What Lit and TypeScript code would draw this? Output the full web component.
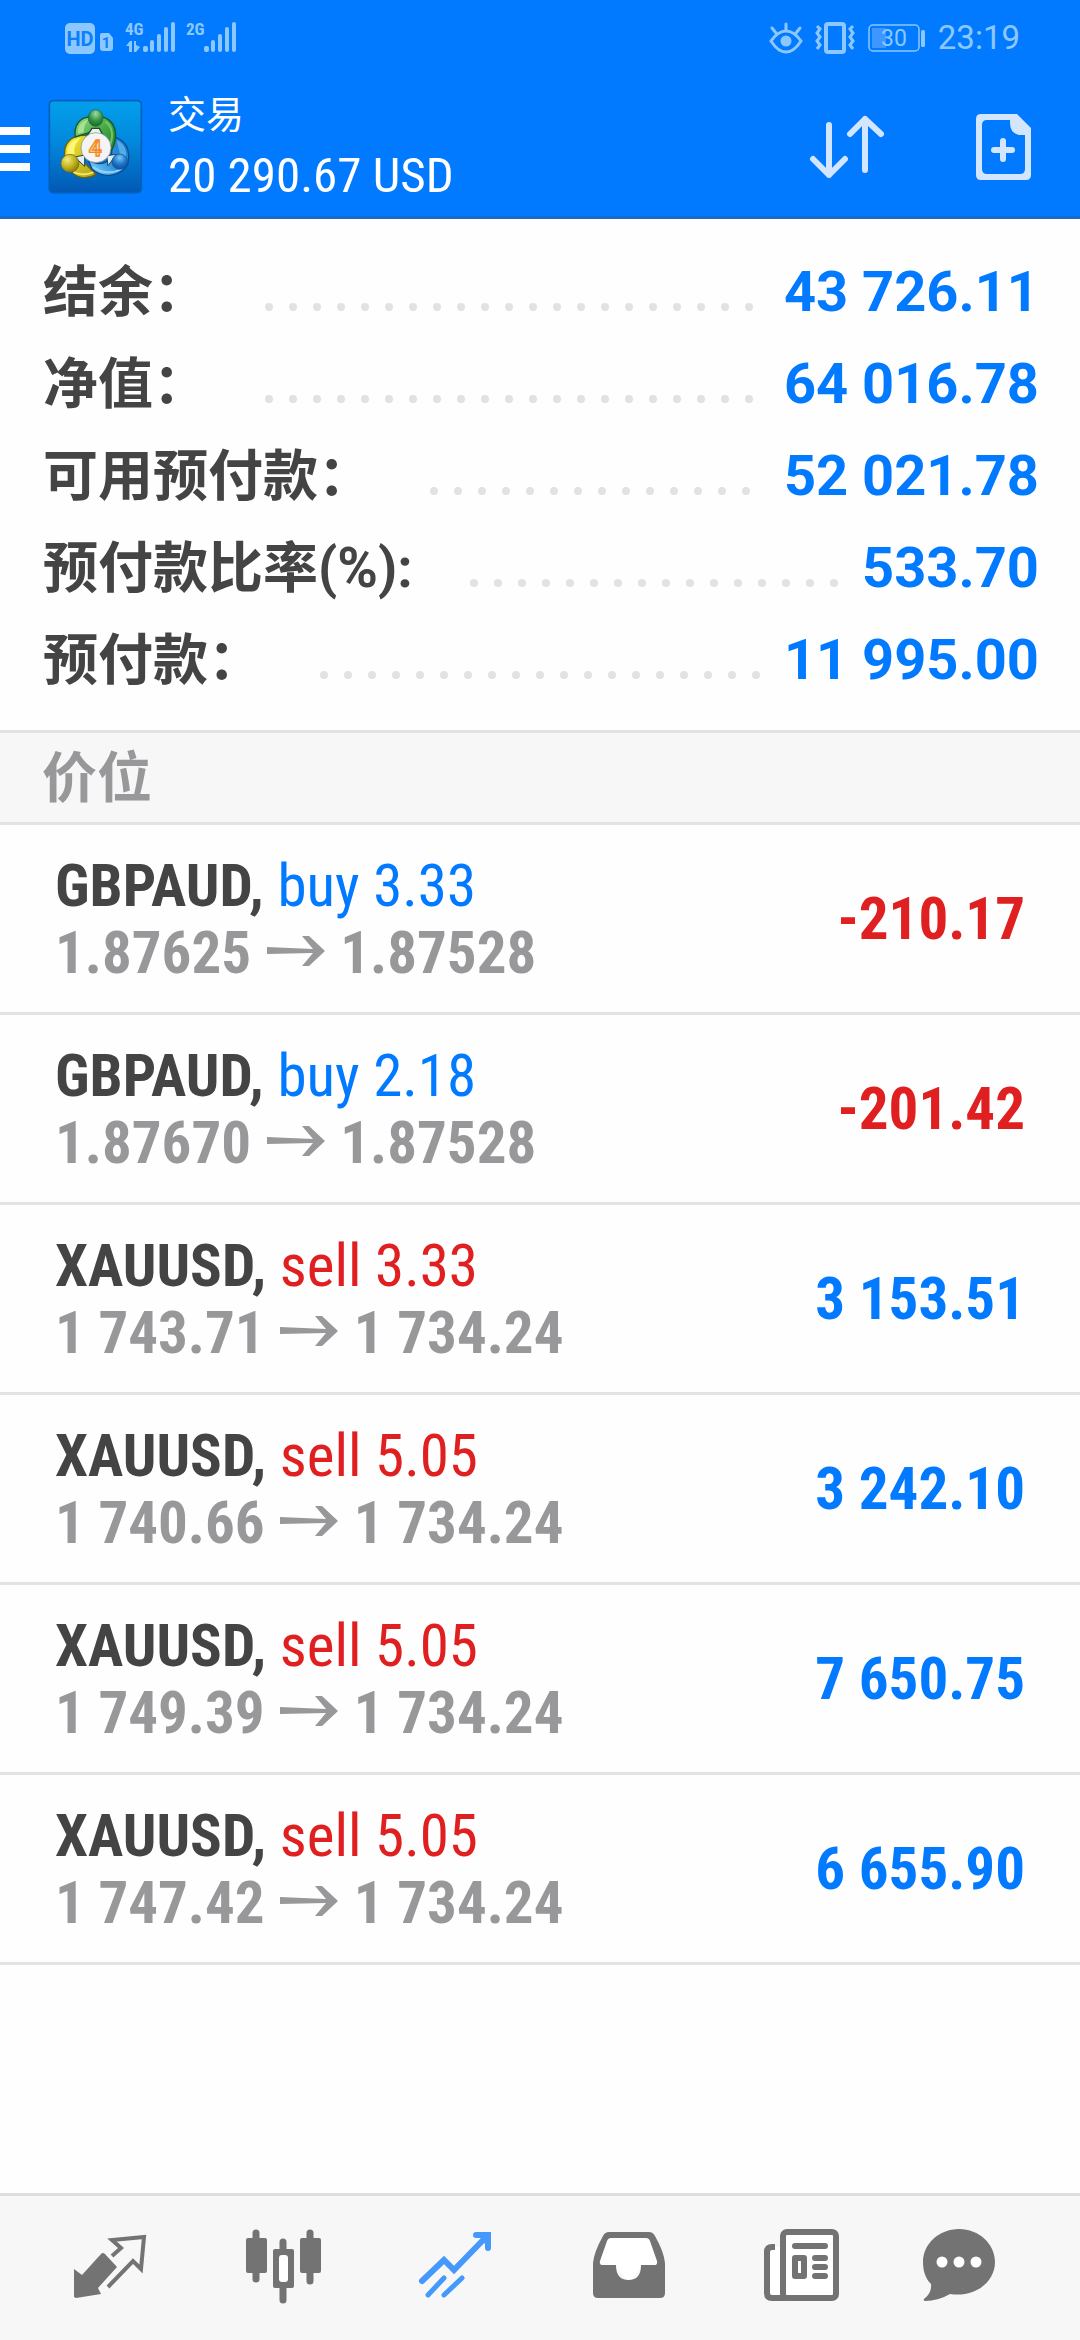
import { LitElement, html, css, svg } from "lit";
import { customElement } from "lit/decorators.js";

interface Total { label: string; value: string; }
interface Position {
  symbol: string; side: "buy" | "sell"; volume: string;
  open: string; current: string; profit: string;
}

const totals: Total[] = [
  { label: "结余：", value: "43 726.11" },
  { label: "净值：", value: "64 016.78" },
  { label: "可用预付款：", value: "52 021.78" },
  { label: "预付款比率(%):", value: "533.70" },
  { label: "预付款：", value: "11 995.00" },
];

const positions: Position[] = [
  { symbol: "GBPAUD", side: "buy", volume: "3.33", open: "1.87625", current: "1.87528", profit: "-210.17" },
  { symbol: "GBPAUD", side: "buy", volume: "2.18", open: "1.87670", current: "1.87528", profit: "-201.42" },
  { symbol: "XAUUSD", side: "sell", volume: "3.33", open: "1 743.71", current: "1 734.24", profit: "3 153.51" },
  { symbol: "XAUUSD", side: "sell", volume: "5.05", open: "1 740.66", current: "1 734.24", profit: "3 242.10" },
  { symbol: "XAUUSD", side: "sell", volume: "5.05", open: "1 749.39", current: "1 734.24", profit: "7 650.75" },
  { symbol: "XAUUSD", side: "sell", volume: "5.05", open: "1 747.42", current: "1 734.24", profit: "6 655.90" },
];

const dots = Array.from({ length: 40 });

@customElement("status-bar")
export class StatusBar extends LitElement {
  static styles = css`
    :host { display: flex; justify-content: space-between; align-items: center; height: 76px;
      padding: 0 60px 0 64px; color: #8cc8ff; }
    .group { display: flex; align-items: center; }
    .left { width: 176px; height: 36px; }
    .right { gap: 11px; }
    .eye { width: 34px; height: 34px; }
    .vibrate { width: 42px; height: 34px; }
    .battery { width: 60px; height: 34px; }
    .time { font: 400 33px/38px Roboto, "Noto Sans", sans-serif; }
    .net { font: 700 17px "Roboto Condensed", Roboto, sans-serif; }
    .hd { font: 700 20px Roboto, sans-serif; }
    .sim { font: 700 15px Roboto, sans-serif; }
    .level { font: 400 23px Roboto, sans-serif; }
  `;
  private bars(x: number) {
    return svg`<g transform="translate(${x} 0)">
      <rect x="0" y="26" width="5" height="6" rx="2"/><rect x="7" y="20" width="4" height="12" rx="2"/>
      <rect x="14" y="14" width="4" height="18" rx="2"/><rect x="21" y="7" width="4" height="25" rx="2"/>
      <rect x="28" y="2" width="4" height="30" rx="2"/></g>`;
  }
  render() {
    return html`
      <svg class="left" viewBox="0 0 176 36" fill="currentColor" role="img" aria-label="HD 4G 2G">
        <rect x="1" y="3" width="30" height="31" rx="5"/>
        <text class="hd" x="16" y="26" text-anchor="middle" fill="#0b7ffc">HD</text>
        <path d="M38 13H45L49 18V28Q49 31 46 31H39Q36 31 36 28V15Q36 13 38 13Z"/>
        <text class="sim" x="42" y="28" text-anchor="middle" fill="#0b7ffc">1</text>
        <text class="net" x="61" y="15">4G</text>
        <path d="M62 26L66 21H68V32H65V26ZM70 21H72V25L76 27L72 32H70Z"/>
        ${this.bars(79)}
        <text class="net" x="122" y="15">2G</text>
        ${this.bars(140)}
      </svg>
      <div class="group right">
        <svg class="eye" viewBox="0 0 34 34" fill="none" stroke="currentColor" stroke-width="3" stroke-linecap="round" aria-hidden="true">
          <path d="M2 20Q9 10 17 10T32 20Q25 31 17 31T2 20Z"/><path d="M17 9V3M7 12L3 7M27 12L31 7"/>
          <circle cx="17" cy="20" r="5.5" fill="currentColor" stroke="none"/>
        </svg>
        <svg class="vibrate" viewBox="0 0 42 34" fill="none" stroke="currentColor" stroke-width="4" aria-hidden="true">
          <rect x="12" y="3" width="18" height="28" rx="2"/>
          <path stroke-width="3" d="M3 5L6 8L3 12L6 16L3 20L6 24L3 28M39 5L36 8L39 12L36 16L39 20L36 24L39 28"/>
        </svg>
        <svg class="battery" viewBox="0 0 60 34" role="img" aria-label="30%">
          <rect x="2" y="4" width="50" height="26" rx="4" fill="none" stroke="currentColor" stroke-width="1.5"/>
          <rect x="5" y="7" width="14" height="20" rx="1" fill="#3d97ff"/>
          <rect x="54" y="9" width="4" height="17" rx="1.5" fill="currentColor"/>
          <text class="level" x="27" y="25" text-anchor="middle" fill="currentColor">30</text>
        </svg>
        <span class="time">23:19</span>
      </div>`;
  }
}

@customElement("app-header")
export class AppHeader extends LitElement {
  static styles = css`
    :host { display: flex; align-items: flex-start; height: 140px; padding-right: 41px; color: #fff;
      border-bottom: 3px solid #1a69c4; }
    button { border: 0; padding: 0; background: none; color: inherit; display: flex; }
    svg { display: block; }
    .menu { margin-top: 50px; width: 30px; height: 46px; }
    .logo { margin: 23px 0 0 18px; width: 96px; height: 96px; }
    .titles { flex: 1; margin: 10px 0 0 24px; }
    h1, p { margin: 0; font-weight: 400; white-space: nowrap; }
    h1 { font-size: 38px; line-height: 52px; font-family: "Noto Sans CJK SC", sans-serif; }
    p { font: 400 49px/75px "Roboto Condensed", "Liberation Sans Narrow", Roboto, sans-serif; }
    .actions { display: flex; gap: 82px; margin-top: 34px; color: #d3e6ff; }
    .sort { width: 80px; height: 76px; }
    .new { width: 72px; height: 76px; }
    .four { font: 700 68px Roboto, sans-serif; }
  `;
  render() {
    return html`
      <button class="menu" aria-label="菜单">
        <svg width="30" height="46" viewBox="0 0 30 46" fill="#fff"><path d="M0 1H30V9H0ZM0 19H30V27H0ZM0 37H30V45H0Z"/></svg>
      </button>
      <svg class="logo" viewBox="24 12 288 288" aria-hidden="true">
        <defs>
          <linearGradient id="bg" x1="0" y1="0" x2="0" y2="1"><stop offset="0" stop-color="#02a0ec"/><stop offset=".45" stop-color="#0288dc"/><stop offset="1" stop-color="#0258b4"/></linearGradient>
          <linearGradient id="g" x1="0" y1="0" x2="1" y2="1"><stop offset="0" stop-color="#a0dc8c"/><stop offset=".5" stop-color="#46aa46"/><stop offset="1" stop-color="#1c7a2c"/></linearGradient>
          <linearGradient id="y" x1="0" y1="0" x2="1" y2="1"><stop offset="0" stop-color="#fff03c"/><stop offset=".5" stop-color="#d2c81e"/><stop offset="1" stop-color="#b4a01e"/></linearGradient>
          <linearGradient id="b" x1="1" y1="0" x2="0" y2="1"><stop offset="0" stop-color="#1e78c8"/><stop offset=".6" stop-color="#3296dc"/><stop offset="1" stop-color="#96dcff"/></linearGradient>
          <radialGradient id="gh" cx=".5" cy=".25" r=".7"><stop offset="0" stop-color="#a0dca0"/><stop offset=".6" stop-color="#329646"/><stop offset="1" stop-color="#1e6e32"/></radialGradient>
          <radialGradient id="yh" cx=".35" cy=".3" r=".7"><stop offset="0" stop-color="#f5eb78"/><stop offset=".6" stop-color="#c3b41e"/><stop offset="1" stop-color="#8c8214"/></radialGradient>
          <radialGradient id="bh" cx=".5" cy=".25" r=".7"><stop offset="0" stop-color="#78c8fa"/><stop offset=".6" stop-color="#1e78c8"/><stop offset="1" stop-color="#0f55a5"/></radialGradient>
        </defs>
        <rect x="28" y="17" width="276" height="276" rx="12" fill="url(#bg)" stroke="#0060bc" stroke-width="5"/>
        <path d="M76 190C66 150 90 118 140 121L130 200L168 238C140 256 102 248 94 226Z" fill="url(#y)" stroke="#666214" stroke-width="4"/>
        <path d="M82 178C80 148 100 130 124 128C106 142 100 160 104 178Z" fill="#fff678"/>
        <path d="M100 232C120 240 140 240 160 232" fill="none" stroke="#f5eb78" stroke-width="5"/>
        <path d="M215 124C258 132 272 165 264 205C250 240 192 256 156 222L145 195C180 215 205 205 215 180Z" fill="url(#b)" stroke="#0b4c94" stroke-width="4"/>
        <path d="M230 136C252 146 260 164 258 184L240 176Z" fill="#52aee8"/>
        <path d="M160 216C184 236 220 236 244 222" fill="none" stroke="#8cd4fa" stroke-width="6"/>
        <path d="M106 126C100 92 120 66 150 66H184C216 70 234 104 224 142C220 160 214 170 202 178L196 130L150 112Z" fill="url(#g)" stroke="#145a24" stroke-width="4"/>
        <path d="M114 116C112 94 124 78 144 74C134 88 130 100 132 112Z" fill="#a8e094"/>
        <path d="M196 80C216 94 222 120 210 150" fill="none" stroke="#74c46c" stroke-width="6"/>
        <path d="M156 100H178L194 130L140 124Z" fill="#e8f4ea" stroke="#1c4a28" stroke-width="4"/>
        <path d="M104 186L134 180V214ZM230 178L200 182L204 212Z" fill="#e4eef6" stroke="#204060" stroke-width="3"/>
        <ellipse cx="167" cy="69" rx="22" ry="25" fill="url(#gh)" stroke="#1a6030" stroke-width="2"/>
        <circle cx="90" cy="205" r="27" fill="url(#yh)" stroke="#716a12" stroke-width="2"/>
        <circle cx="239" cy="200" r="23" fill="url(#bh)" stroke="#104e94" stroke-width="2"/>
        <circle cx="168" cy="158" r="45" fill="#f4f4f6" stroke="#7c8484" stroke-width="2"/>
        <text class="four" x="166" y="182" text-anchor="middle" fill="#fbd8b4" stroke="#f28a1c" stroke-width="4">4</text>
      </svg>
      <div class="titles"><h1>交易</h1><p>20 290.67 USD</p></div>
      <div class="actions">
        <button class="sort" aria-label="排序">
          <svg width="80" height="76" viewBox="0 0 80 76" fill="none" stroke="currentColor" stroke-width="6" stroke-linecap="round" stroke-linejoin="round">
            <path d="M24 15V65M8 49L24 65L40 49M60 60V9M45 24L60 9L76 24"/></svg>
        </button>
        <button class="new" aria-label="新订单">
          <svg width="72" height="76" viewBox="0 0 72 76">
            <path fill="currentColor" fill-rule="evenodd" d="M14 4H50L64 18V65Q64 70 59 70H14Q9 70 9 65V9Q9 4 14 4ZM20 10Q15 10 15 15V59Q15 64 20 64H53Q58 64 58 59V25H52Q43 23 43 13V10Z"/>
            <path d="M36 31V49M27 40H45" stroke="currentColor" stroke-width="6" stroke-linecap="round"/></svg>
        </button>
      </div>`;
  }
}

@customElement("account-summary")
export class AccountSummary extends LitElement {
  static styles = css`
    :host { display: block; padding: 27px 41px 24px 43px; }
    dl { margin: 0; }
    .row { display: flex; align-items: center; height: 92px; }
    dt { font: 700 55px/92px Roboto, "Noto Sans CJK SC", sans-serif; color: #444; white-space: nowrap; }
    dd { margin: 0; font: 700 56px/92px Roboto, sans-serif; color: #027aff; white-space: nowrap; }
    .leader { flex: 1; display: flex; flex-wrap: wrap; height: 24px; overflow: hidden; margin: 30px 7px 0 49px; }
    .dot { width: 8px; height: 8px; margin: 8px; border-radius: 50%; background: #e2e2e2; }
  `;
  render() {
    return html`<dl>${totals.map((t) => html`
      <div class="row"><dt>${t.label}</dt>
        <span class="leader" aria-hidden="true">${dots.map(() => html`<i class="dot"></i>`)}</span>
        <dd>${t.value}</dd></div>`)}</dl>`;
  }
}

@customElement("position-list")
export class PositionList extends LitElement {
  static styles = css`
    :host { display: block; }
    h2 { margin: 0; padding: 0 42px 8px; background: #f7f7f7; color: #98989b; border: solid #e3e3e3; border-width: 3px 0;
      font: 700 55px/81px "Noto Sans CJK SC", sans-serif; }
    ul { margin: 0; padding: 0; list-style: none; }
    li { display: flex; justify-content: space-between; align-items: center; height: 187px; padding: 0 55px;
      border-bottom: 3px solid #e3e3e3; white-space: nowrap;
      font: 700 59px/67px "Roboto Condensed", "Liberation Sans Narrow", Roboto, sans-serif; }
    .symbol { color: #444; }
    .order { font-weight: 400; }
    .buy, .gain { color: #027aff; }
    .sell, .loss { color: #e02020; }
    .prices { color: #98989b; }
    .arrow { width: 62px; height: 30px; vertical-align: 7px; }
  `;
  render() {
    return html`<h2>价位</h2>
      <ul>${positions.map((p) => html`<li>
        <div>
          <div><span class="symbol">${p.symbol},</span> <span class="order ${p.side}">${p.side} ${p.volume}</span></div>
          <div class="prices">${p.open} <svg class="arrow" viewBox="0 0 62 30" role="img" aria-label="→"><path fill="currentColor" d="M2 11L48 13L37 0H44L60 15L44 30H37L48 17L2 18Z"/></svg> ${p.current}</div>
        </div>
        <span class=${p.profit.startsWith("-") ? "loss" : "gain"}>${p.profit}</span>
      </li>`)}</ul>`;
  }
}

@customElement("tab-bar")
export class TabBar extends LitElement {
  static styles = css`
    nav { display: grid; grid-template-columns: repeat(5, 173fr) 142fr; padding: 0 50px 0 23px; height: 144px;
      background: #f7f7f7; border-top: 3px solid #dedede; color: #737373; }
    button { border: 0; padding: 0; background: none; color: inherit; display: flex; align-items: center; justify-content: center; }
    .active { color: #4499fb; }
  `;
  private tabs = [
    { name: "报价", icon: svg`<path fill="currentColor" d="M4 41L12 47L31 26Q33 24 35 26L47 39L28 60L31 66L6 70L4 69Z"/><path fill="none" stroke="currentColor" stroke-width="4" d="M42 28L51 20L42 12L74 9L71 41L63 33L38 59"/>` },
    { name: "图表", icon: svg`<path stroke="currentColor" stroke-width="7" stroke-linecap="round" d="M13 5V51M67 5V53M40 14V72"/><g fill="currentColor"><rect x="3" y="10" width="21" height="35" rx="2"/><rect x="57" y="10" width="21" height="35" rx="2"/><rect x="30" y="21" width="21" height="39" rx="2"/></g><rect x="36" y="27" width="9" height="27" rx="3" fill="#fff"/>` },
    { name: "交易", icon: svg`<g fill="none" stroke="currentColor" stroke-width="6" stroke-linecap="round"><path d="M6 53L28 32L38 42L71 8"/><path d="M60 7H72V20"/><path stroke-width="5" d="M12 67L28 50M28 67L46 50"/></g><path fill="currentColor" d="M62 6H74V20L68 15Z"/>` },
    { name: "历史", icon: svg`<path fill="#fff" d="M16 8H62L70 38H54L40 54L26 38H9Z"/><path fill="currentColor" fill-rule="evenodd" d="M20 4H60Q64 4 66 8Q75 24 76 35V65Q76 70 71 70H9Q4 70 4 65V35Q5 24 14 8Q16 4 20 4ZM22 10Q19 10 18 13L11 33Q10 37 14 37H27Q27 52 39.500 52Q52 52 52 37H65Q69 37 68 33L61 13Q60 10 57 10Z"/>` },
    { name: "新闻", icon: svg`<path fill="#fff" d="M5 19H20V70H5Z"/><rect x="21" y="4" width="53" height="66" rx="4" fill="#fff" stroke="currentColor" stroke-width="6"/><path fill="none" stroke="currentColor" stroke-width="6" d="M13 19H10Q5 19 5 24V65Q5 70 10 70H24"/><g fill="currentColor"><rect x="30" y="15" width="36" height="6" rx="3"/><rect x="50" y="27" width="16" height="6" rx="3"/><rect x="50" y="36" width="16" height="6" rx="3"/><rect x="50" y="45" width="16" height="6" rx="3"/><path fill-rule="evenodd" d="M33 27H42Q45 27 45 30V48Q45 51 42 51H33Q30 51 30 48V30Q30 27 33 27ZM36 33V45H39V33Z"/></g>` },
    { name: "消息", icon: svg`<path fill="currentColor" d="M40 1C60 1 76 16 76 34C76 54 56 70 31 66Q19 73 6 73Q4 72 5 71Q13 65 12 56C6 50 4 42 4 34C4 16 20 1 40 1Z"/><g fill="#fff"><circle cx="23" cy="34" r="5.500"/><circle cx="40" cy="34" r="5.500"/><circle cx="57" cy="34" r="5.500"/></g>` },
  ];
  render() {
    return html`<nav>${this.tabs.map((t, i) => html`
      <button class=${i === 2 ? "active" : ""} aria-label=${t.name}>
        <svg width="80" height="80" viewBox="0 0 80 80">${t.icon}</svg>
      </button>`)}</nav>`;
  }
}

@customElement("app-root")
export class AppRoot extends LitElement {
  static styles = css`
    :host { display: flex; flex-direction: column; min-height: 100vh; background: #fefefe; }
    .top { background: #027aff; }
    .tabs { margin-top: auto; }
  `;
  render() {
    return html`
      <header class="top"><status-bar></status-bar><app-header></app-header></header>
      <main><account-summary></account-summary><position-list></position-list></main>
      <tab-bar class="tabs"></tab-bar>`;
  }
}
